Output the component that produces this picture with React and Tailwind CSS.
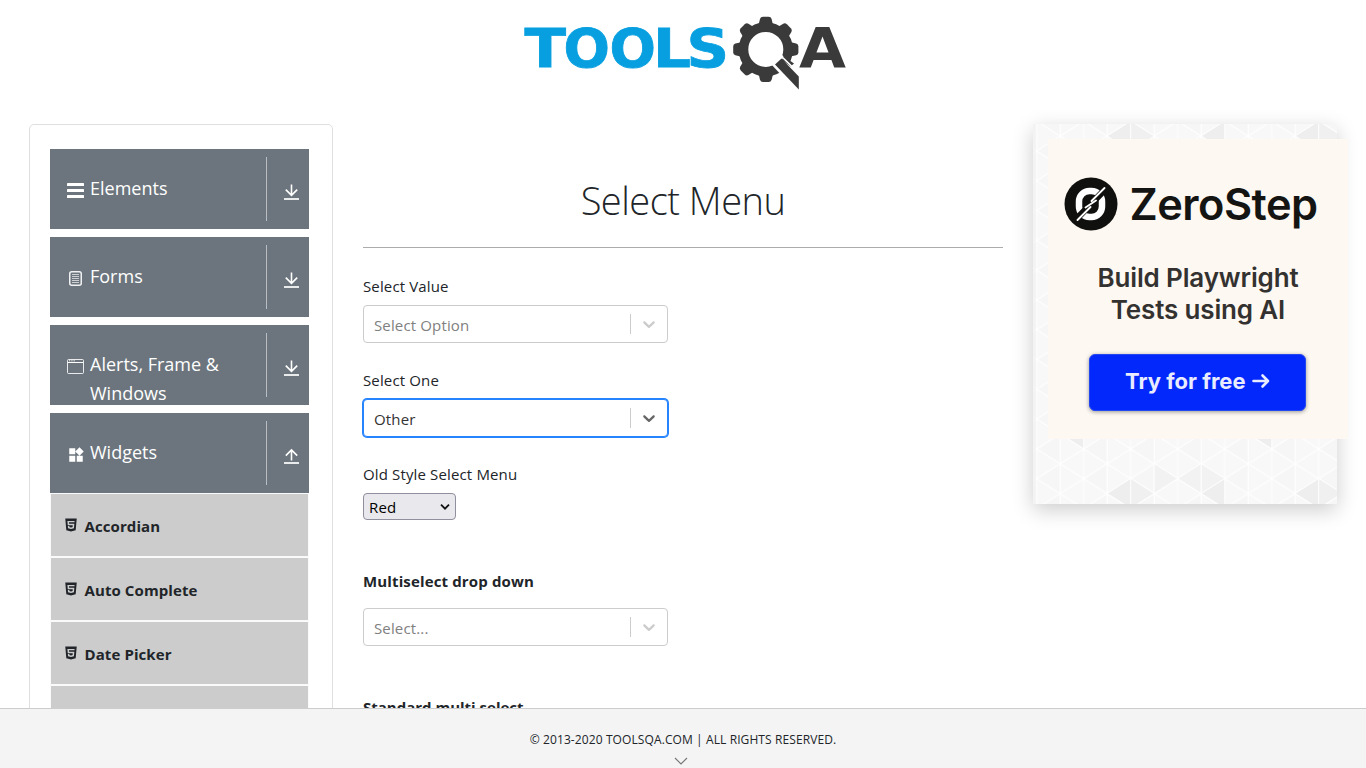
import React from "react";
import { AiFillHtml5 } from "react-icons/ai";
import { MdWidgets } from "react-icons/md";

const teeth = [0, 45, 90, 135, 180, 225, 270, 315];

const letters = [
  { x: 524.6, w: 41.5, c: "T" },
  { x: 563.6, w: 46.4, c: "O" },
  { x: 609.6, w: 46.4, c: "O" },
  { x: 653, w: 38, c: "L" },
  { x: 686.6, w: 42.6, c: "S" },
];

function Logo() {
  return (
    <svg width="330" height="84" viewBox="520 10 330 84" className="block">
      <g fill="#079fe0" stroke="#079fe0" strokeWidth="0.8" fontFamily="DejaVu Sans" fontWeight="700" fontSize="54">
        {letters.map((l) => (
          <text key={l.x} x={l.x} y="66.7" textLength={l.w} lengthAdjust="spacingAndGlyphs">{l.c}</text>
        ))}
      </g>
      <g fill="#3a3a3b">
        {teeth.map((a) => (
          <path key={a} d="M758.5 25 L760 19 Q760.6 16.8 763 16.8 H768.6 Q771 16.8 771.6 19 L773 25 Z" transform={`rotate(${a} 765.8 49.4)`} />
        ))}
      </g>
      <circle cx="765.8" cy="49.4" r="22.3" fill="none" stroke="#3a3a3b" strokeWidth="9.6" />
      <path d="M771 64 L781 54 L806 77 V94 L796 91 Z" fill="#fff" />
      <path d="M783.5 56 L794 63.5 L790.5 66.5 L782 60Z" fill="#3a3a3b" />
      <path d="M782.4 57.2 L792 66.6" stroke="#fff" strokeWidth="1.6" />
      <path d="M775 64.4 L781.5 58.5 L798.8 76.5 V89.5 Z" fill="#3a3a3b" />
      <text x="799" y="67" textLength="47" lengthAdjust="spacingAndGlyphs" fill="#3a3a3b" fontFamily="DejaVu Sans" fontWeight="700" fontSize="54.5">A</text>
    </svg>
  );
}

const iconBars = (
  <svg width="17" height="15" viewBox="0 0 17 15" fill="#fff"><rect y="0" width="17" height="3" rx=".6" /><rect y="6" width="17" height="3" rx=".6" /><rect y="12" width="17" height="3" rx=".6" /></svg>
);
const iconForm = (
  <svg width="13" height="15" viewBox="0 0 13 15" fill="none" stroke="#fff"><rect x=".75" y=".75" width="11.5" height="13.5" rx="2" strokeWidth="1.5" strokeOpacity=".9" /><path d="M3 3.5h7M3 5.5h7M3 7.5h7M3 9.5h7M3 11.5h7" strokeWidth="1" strokeOpacity=".65" /></svg>
);
const iconWindow = (
  <svg width="17" height="15" viewBox="0 0 17 15" fill="none" stroke="#fff"><rect x=".5" y=".5" width="16" height="14" rx="1" strokeOpacity=".85" /><path d="M1 3.5h15" /><path d="M2 1.8h1.2M4.3 1.8h1.2M6.6 1.8h1.2" strokeOpacity=".9" /></svg>
);

function GroupHeader({ icon, label, open }) {
  return (
    <div className="flex h-20 w-[259px] overflow-hidden bg-[#6c757d] py-2 text-white">
      <div className="flex h-16 w-[217px] shrink-0 border-r border-[#b9bcc0] pt-[17px] pl-4">
        <div className="mt-[9px] flex h-[15px] w-[19px] shrink-0 items-center justify-center">{icon}</div>
        <div className="ml-[5px] h-[72px] w-[150px] shrink-0 text-[18px] leading-[29px]">{label}</div>
      </div>
      <svg width="15" height="17" viewBox="0 0 15 17" className="mt-[27px] ml-[17px] shrink-0" fill="none" stroke="#fff">
        {open ? <path d="M7.5 12.5V2M1.8 7.6 7.5 1.9 13.2 7.6" strokeWidth="1.6" /> : <path d="M7.5 0.5V11M1.8 5.6 7.5 11.3 13.2 5.6" strokeWidth="1.6" />}
        <path d="M0 15H15" strokeWidth="2" strokeOpacity=".85" />
      </svg>
    </div>
  );
}

function SubItem({ label }) {
  return (
    <div className="mx-px mb-0.5 flex h-[62px] shrink-0 bg-[#ccc] pl-3 text-[#212529]">
      <AiFillHtml5 size={16} className="mt-[23px]" />
      <div className="ml-[5.5px] mt-5 text-[15px] leading-6 font-bold tracking-[0.09px]">{label}</div>
    </div>
  );
}

function SelectBox({ text, active }) {
  return (
    <div className={active ? "flex h-[38px] w-[305px] items-center rounded border border-[#2684ff] bg-white shadow-[0_0_0_1px_#2684ff]" : "flex h-[38px] w-[305px] items-center rounded border border-[#ccc] bg-white"}>
      <div className={active ? "flex-1 pt-px pl-[10px] leading-5 text-[#333]" : "flex-1 pt-px pl-[10px] leading-5 text-[#808080]"}>{text}</div>
      <div className="h-5 w-px bg-[#ccc]" />
      <div className="p-2">
        <svg width="20" height="20" viewBox="0 0 20 20" fill={active ? "#666" : "#ccc"}>
          <path d="M4.516 7.548c0.436-0.446 1.043-0.481 1.576 0l3.908 3.747 3.908-3.747c0.533-0.481 1.141-0.446 1.574 0 0.436 0.445 0.408 1.197 0 1.615-0.406 0.418-4.695 4.502-4.695 4.502-0.217 0.223-0.502 0.335-0.787 0.335s-0.57-0.112-0.789-0.335c0 0-4.287-4.084-4.695-4.502s-0.436-1.17 0-1.615z" />
        </svg>
      </div>
    </div>
  );
}

function Triangles() {
  const w = 23.5;
  return (
    <svg width="304" height="380" viewBox="0 0 304 380" className="absolute inset-0">
      <defs>
        <pattern id="tri" x="3.7" y="12" width="47" height="29.8" patternUnits="userSpaceOnUse">
          <rect width="47" height="29.8" fill="#f8f8f8" />
          <path d="M0 14.9 L23.5 0 V29.8Z" fill="#f6f6f6" />
          <path d="M0 14.9 L23.5 0 L47 14.9 M0 14.9 L23.5 29.8 L47 14.9 M0 0V29.8 M23.5 0V29.8 M47 0V29.8" stroke="#fff" strokeWidth="1.1" fill="none" />
        </pattern>
      </defs>
      <rect width="304" height="380" fill="url(#tri)" />
      <rect width="3" height="380" fill="#f0f0f0" fillOpacity=".6" />
      <g stroke="#fff" strokeWidth="0.8">
        {[12, 369.4].map((y) => [3, 7, 11].map((n) => {
          const x = 3.7 + n * w;
          return <path key={`${y}-${n}`} d={`M${x} ${y} L${x + w} ${y - 14.9} V${y + 14.9}Z`} fill="#eeeeee" />;
        }))}
        {[12, 369.4].map((y) => [5, 13].map((n) => {
          const x = 3.7 + n * w;
          return <path key={`${y}-${n}`} d={`M${x} ${y} L${x - w} ${y - 14.9} V${y + 14.9}Z`} fill="#f0f0f0" />;
        }))}
        <path d="M144.7 354.5 L121.2 339.6 V369.4Z M144.7 354.5 L168.2 339.6 V369.4Z M191.7 354.5 L168.2 339.6 V369.4Z" fill="#f2f2f2" />
        <path d="M27.2 309.8 L50.7 294.9 V324.7Z M215.2 309.8 L238.7 294.9 V324.7Z" fill="#eeeeee" />
      </g>
    </svg>
  );
}

function Ad() {
  return (
    <div className="relative h-[300px] w-[300px] bg-[#fdf8f2] pt-[38px] font-['Inter',sans-serif]">
      <div className="flex h-[54px] items-center pl-4">
        <svg width="54" height="54" viewBox="0 0 54 54" className="shrink-0">
          <circle cx="27" cy="27" r="26.5" fill="#10100f" />
          <rect x="15" y="14" width="23" height="26" rx="10.5" fill="none" stroke="#fff" strokeWidth="6.5" />
          <path d="M10 44.5 L43 10.5" stroke="#10100f" strokeWidth="6.5" />
          <path d="M13.5 43 L26.5 30 M21.5 30.5 L32 23.5 M27.5 24 L40.5 11" stroke="#fff" strokeWidth="1.9" strokeLinecap="round" />
        </svg>
        <div className="ml-[11.5px] text-[43.3px] leading-[54px] font-semibold tracking-[-0.5px] whitespace-nowrap text-[#141413]">ZeroStep</div>
      </div>
      <div className="mt-[31px] text-center text-[26px] leading-[31.5px] font-semibold tracking-[-0.15px] text-[#343230]">
        Build Playwright<br />Tests using AI
      </div>
      <div className="mt-[29px] ml-[41px] flex h-[57px] w-[217px] items-center rounded-md border border-[#2448ef] bg-[#0328fb] pb-[3px] pl-[35px] text-[22px] font-bold text-[#e9ecff] shadow-[0_1px_4px_rgba(0,0,0,0.4)]">
        <span className="whitespace-nowrap">Try for free</span>
        <svg width="18" height="16" viewBox="0 0 18 16" className="ml-[6px]" fill="none" stroke="#e9ecff" strokeWidth="2.6" strokeLinecap="round" strokeLinejoin="round"><path d="M1.5 8H16M10.5 2.5 16 8 10.5 13.5" /></svg>
      </div>
    </div>
  );
}

export default function App() {
  return (
    <div className="flex h-[768px] w-[1366px] flex-col overflow-hidden bg-white font-['Open_Sans',sans-serif] text-[#212529]">
      <div className="min-h-0 flex-1 overflow-hidden">
        <header className="flex h-[124px] pt-[10px] pl-[520px]"><Logo /></header>
        <div className="flex pl-[29px]">
          <aside className="flex h-[700px] w-[304px] shrink-0 flex-col rounded-[5px] border border-[#dfdfdf] px-5 pt-6">
            <div className="flex flex-col gap-2">
              <GroupHeader icon={iconBars} label="Elements" />
              <GroupHeader icon={iconForm} label="Forms" />
              <GroupHeader icon={iconWindow} label={<>Alerts, Frame &amp;<br />Windows</>} />
              <GroupHeader icon={<MdWidgets size={18} className="shrink-0" />} label="Widgets" open />
            </div>
            <div className="flex w-[259px] flex-col bg-[#fafafa] pt-px">
              <SubItem label="Accordian" />
              <SubItem label="Auto Complete" />
              <SubItem label="Date Picker" />
              <SubItem />
            </div>
          </aside>
          <main className="ml-[30px] w-[640px] shrink-0 text-[15px] tracking-[0.14px]">
            <h1 className="mt-12 h-[75px] pt-1 text-center text-[38px] leading-[48px] font-light tracking-[-0.5px]">Select Menu</h1>
            <div className="h-px bg-[#acacac]" />
            <div className="mt-[26px] h-[31px] leading-6">Select Value</div>
            <SelectBox text="Select Option" />
            <div className="mt-[25px] h-[31px] leading-6">Select One</div>
            <SelectBox text="Other" active />
            <div className="mt-[25px] h-[31px] leading-6">Old Style Select Menu</div>
            <div className="flex h-[27px] w-[93px] items-center justify-between rounded border border-[#8f8f9d] bg-[#e9e9ed] px-[5px] text-black">
              <span className="leading-5">Red</span>
              <svg width="10" height="8" viewBox="0 0 10 8" fill="none" stroke="#111" strokeWidth="1.8"><path d="M1 1.7 5 5.7 9 1.7" /></svg>
            </div>
            <div className="mt-[49px] h-[39px] leading-6 font-bold">Multiselect drop down</div>
            <SelectBox text="Select..." />
            <div className="mt-[49px] leading-6 font-bold tracking-normal">Standard multi select</div>
          </main>
          <div className="relative ml-[30px] h-[380px] w-[304px] shrink-0 bg-[#f7f7f7] pt-[15px] pl-[15px] shadow-[0_6px_20px_rgba(0,0,0,0.2)]">
            <Triangles />
            <Ad />
          </div>
        </div>
      </div>
      <footer className="flex h-[60px] shrink-0 flex-col items-center border-t border-[#ccc] bg-[#f4f4f4]">
        <div className="mt-[21px] text-[12px] leading-5 tracking-[0.1px] whitespace-nowrap">© 2013-2020 TOOLSQA.COM | ALL RIGHTS RESERVED.</div>
        <svg width="14" height="8" viewBox="0 0 14 8" className="mt-[7px] mr-1 shrink-0" fill="none" stroke="#777" strokeWidth="1.1"><path d="M1 1 7 7 13 1" /></svg>
      </footer>
    </div>
  );
}
